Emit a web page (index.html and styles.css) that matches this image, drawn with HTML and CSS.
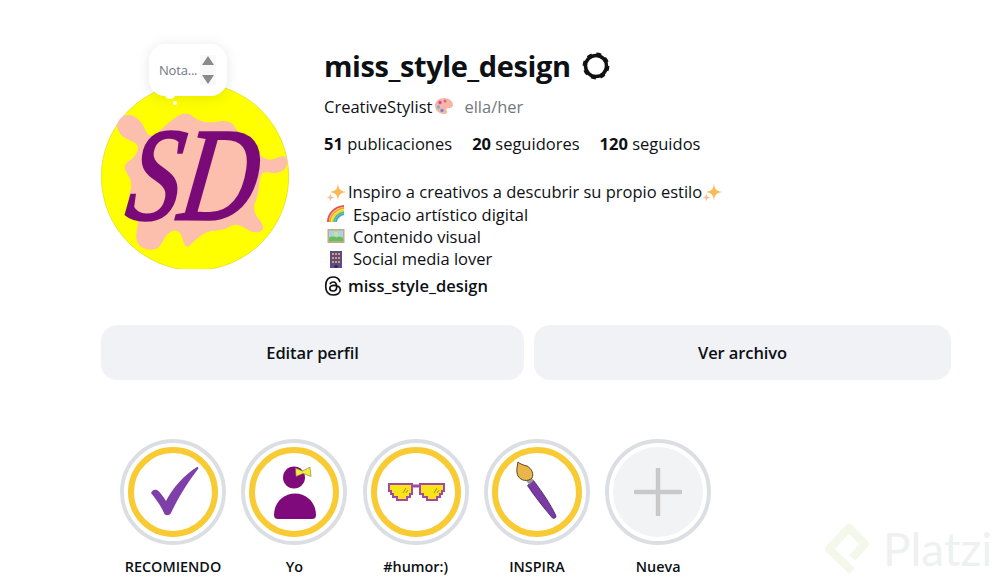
FILE: index.html
```html
<!DOCTYPE html>
<html lang="es">

<head>
  <meta charset="UTF-8">
  <meta name="viewport" content="width=device-width, initial-scale=1.0">
  <title>miss_style_design</title>
  <link rel="stylesheet" href="styles.css">
</head>

<body>
  <main class="profile">
    <header class="top">
      <div class="avatar">
        <svg class="avatar-img" viewBox="33 165 564 555">
          <circle cx="315" cy="443" r="281" fill="#ffff00" stroke="#d8d820" stroke-width="2" />
          <path fill="#fcbfae" d="M92 268 Q110 250 132 262 Q155 275 167 305 Q180 335 210 305 Q240 275 265 260 Q290 245 312 265 Q335 285 380 278 Q425 270 437 298 Q450 325 482 355 Q515 385 530 390 Q545 395 565 385 Q592 375 592 398 Q592 420 572 428 Q555 435 532 430 Q510 425 508 462 Q505 500 495 522 Q485 545 508 572 Q530 600 510 608 Q490 615 465 598 Q440 580 420 592 Q400 605 375 605 Q350 605 330 622 Q310 640 298 650 Q285 660 278 630 Q270 600 250 605 Q230 610 218 638 Q205 665 178 662 Q150 660 142 640 Q135 620 142 595 Q150 570 130 545 Q110 520 120 490 Q130 460 112 435 Q95 410 115 398 Q135 385 142 365 Q150 345 122 335 Q95 325 85 305 Q75 285 92 268 Z" />
          <text class="logo-letter" transform="translate(102 570) skewX(-8) scale(0.8 1)" font-size="395">SD</text>
        </svg>
        <div class="note">
          <span class="note-text">Nota...</span>
          <span class="note-spin">
            <svg width="14" height="30" viewBox="0 0 14 30">
              <path d="M7 1 L13 10 H1 Z M1 20 H13 L7 29 Z" fill="#8a8a8a" />
            </svg>
          </span>
        </div>
        <span class="note-tail"></span>
        <span class="note-dot"></span>
      </div>

      <div class="info">
        <div class="name-row">
          <h1>miss_style_design</h1>
          <svg class="badge" width="30" height="30" viewBox="0 0 30 30">
            <circle cx="15" cy="15" r="10.5" fill="none" stroke="#111" stroke-width="3.5" />
            <circle cx="15" cy="15" r="12.4" fill="none" stroke="#111" stroke-width="2" stroke-dasharray="5 4.740" />
          </svg>
        </div>

        <div class="subtitle">
          <span>CreativeStylist</span>
          <svg class="emoji palette" width="20" height="20" viewBox="0 0 20 20">
            <path d="M10 2 C15 2 19 5 19 9 C19 12 16 12 14 12 C12 12 12 14 13 15 C14 17 12 18 10 18 C5 18 1 14 1 10 C1 5 5 2 10 2 Z" fill="#f4b6a6" />
            <circle cx="6" cy="6.500" r="1.700" fill="#e0489a" />
            <circle cx="11" cy="5" r="1.500" fill="#e8618c" />
            <circle cx="4.500" cy="11" r="1.700" fill="#7fb2c8" />
            <circle cx="8" cy="14.500" r="1.700" fill="#7c86c8" />
          </svg>
          <span class="pronouns">ella/her</span>
        </div>

        <ul class="stats">
          <li><b>51</b> publicaciones</li>
          <li><b>20</b> seguidores</li>
          <li><b>120</b> seguidos</li>
        </ul>

        <div class="bio">
          <div class="bio-line">
            <svg class="emoji tight" width="20" height="20" viewBox="0 0 20 20">
              <path d="M12 1 C12.500 7 14 9 20 10 C14 11 12.500 13 12 19 C11.500 13 10 11 4 10 C10 9 11.500 7 12 1 Z" fill="#fbb954" />
              <path d="M4.500 11 C4.800 14 5.500 15 8.500 15.500 C5.500 16 4.800 17 4.500 20 C4.200 17 3.500 16 0.500 15.500 C3.500 15 4.200 14 4.500 11 Z" fill="#f9c08c" />
            </svg>
            <span>Inspiro a creativos a descubrir su propio estilo</span>
            <svg class="emoji" width="20" height="20" viewBox="0 0 20 20">
              <path d="M12 1 C12.500 7 14 9 20 10 C14 11 12.500 13 12 19 C11.500 13 10 11 4 10 C10 9 11.500 7 12 1 Z" fill="#fbb954" />
              <path d="M4.500 11 C4.800 14 5.500 15 8.500 15.500 C5.500 16 4.800 17 4.500 20 C4.200 17 3.500 16 0.500 15.500 C3.500 15 4.200 14 4.500 11 Z" fill="#f9c08c" />
            </svg>
          </div>
          <div class="bio-line">
            <svg class="emoji" width="20" height="20" viewBox="0 0 20 20" fill="none" stroke-width="2">
              <path d="M2 18 C2 10 8 3 18 2" stroke="#e5534b" />
              <path d="M4 18 C4 12 10 5 18 4" stroke="#f5a623" />
              <path d="M6 18 C6 13 11 7 18 6" stroke="#f5dc3c" />
              <path d="M8 18 C8 14 12 9 18 8" stroke="#5cbf6a" />
              <path d="M10 18 C10 15 13 11 18 10" stroke="#4aa3e0" />
            </svg>
            <span>Espacio artístico digital</span>
          </div>
          <div class="bio-line">
            <svg class="emoji" width="20" height="20" viewBox="0 0 20 20">
              <rect x="1.500" y="3" width="17" height="14" fill="#cfa57c" />
              <rect x="3" y="4.500" width="14" height="11" fill="#9fd6ea" />
              <circle cx="10" cy="8" r="2" fill="#f5d76a" />
              <path d="M3 15.500 V12 C6 9.500 9 11 10.500 11.500 C13 10 15 10.500 17 12 V15.500 Z" fill="#6cbb5a" />
            </svg>
            <span>Contenido visual</span>
          </div>
          <div class="bio-line">
            <svg class="emoji" width="20" height="20" viewBox="0 0 20 20">
              <rect x="4" y="2" width="12" height="17" fill="#5b4a8e" />
              <path d="M6 4 H8 V6 H6 Z M9 4 H11 V6 H9 Z M12 4 H14 V6 H12 Z M6 8 H8 V10 H6 Z M9 8 H11 V10 H9 Z M12 8 H14 V10 H12 Z M6 12 H8 V14 H6 Z M9 12 H11 V14 H9 Z M12 12 H14 V14 H12 Z" fill="#d9a04c" />
              <rect x="8.500" y="16" width="3" height="3" fill="#2f2a50" />
            </svg>
            <span>Social media lover</span>
          </div>
        </div>

        <a class="threads">
          <svg width="18" height="20" viewBox="0 0 18 20" fill="none" stroke="#111" stroke-width="1.700" stroke-linecap="round">
            <path d="M15.800 5.500 C14.800 2.500 12.500 1 9.300 1 C4.500 1 1.700 4.300 1.700 10 C1.700 15.700 4.500 19 9.300 19 C13.500 19 16.300 16.800 16.300 13.800 C16.300 10.800 13.500 9.300 10 9.300 C7.500 9.300 5.800 10.500 5.800 12.300 C5.800 14 7.300 15 9.100 15 C11.400 15 12.700 13.300 12.700 10.800 C12.700 7.800 11.300 6 9.200 6 C7.900 6 6.900 6.500 6.300 7.500" />
          </svg>
          <span>miss_style_design</span>
        </a>
      </div>
    </header>

    <div class="actions">
      <button class="btn btn-edit">Editar perfil</button>
      <button class="btn btn-archive">Ver archivo</button>
    </div>

    <section class="highlights">
      <div class="highlight">
        <div class="ring">
          <div class="ring-inner">
            <svg width="78" height="78" viewBox="0 0 78 78">
              <path d="M17 40 C18 37 21 36 23 37 C26 39 29 43 32 48 C38 36 50 22 63 14 C64 13.500 65 15 64 16 C54 29 44 45 37 60 C35 63 31 63 30 60 C27 53 22 46 17 40 Z" fill="#7f3fa8" />
            </svg>
          </div>
        </div>
        <span class="label">RECOMIENDO</span>
      </div>

      <div class="highlight">
        <div class="ring">
          <div class="ring-inner">
            <svg width="78" height="78" viewBox="0 0 78 78">
              <circle cx="39" cy="24.500" r="11" fill="#7e0a7c" />
              <path d="M19 62 C19 50 28 40.500 40 40.500 C52 40.500 61 50 61 62 Q61 66 57 66 H23 Q19 66 19 62 Z" fill="#7e0a7c" />
              <path d="M40.500 15 L47.500 18 L55 14 L56 23.500 L48 20.500 L41 23.500 Z" fill="#f4ec3c" stroke="#77773a" stroke-width="0.600" />
            </svg>
          </div>
        </div>
        <span class="label">Yo</span>
      </div>

      <div class="highlight">
        <div class="ring">
          <div class="ring-inner">
            <svg width="78" height="78" viewBox="0 0 78 78">
              <path d="M34 33 H44" stroke="#a34aa0" stroke-width="3" />
              <path d="M12 31 H35 V41 H33 V44 H30 V47 H20 V44 H16 V41 H14 V38 H12 Z" fill="#f7e51a" stroke="#a34aa0" stroke-width="2" />
              <path d="M43 31 H67 V38 H65 V41 H63 V44 H60 V47 H50 V44 H46 V41 H43 Z" fill="#f7e51a" stroke="#a34aa0" stroke-width="2" />
              <path d="M26 40 L29 35 M29 40 L31 37 M57 40 L60 35 M60 40 L62 37" stroke="#8a7a30" stroke-width="0.800" />
            </svg>
          </div>
        </div>
        <span class="label">#humor:)</span>
      </div>

      <div class="highlight">
        <div class="ring">
          <div class="ring-inner">
            <svg width="78" height="78" viewBox="0 0 78 78">
              <path d="M29.500 32.500 L35.500 27.500 C45 40 53 52 58 63 C58 65.500 55 66 54 64.500 C46 55 37 44 29.500 32.500 Z" fill="#7b3aa5" stroke="#3b2a5a" stroke-width="0.800" />
              <path d="M30.500 26 L33.500 29.500" stroke="#9a9a9a" stroke-width="6" />
              <path d="M20 9 C19 14 18 19 20 23 C23 28 30 29 34 25 C36 21 34 16 29 13 C25 12 22 11 20 9 Z" fill="#e9b64a" stroke="#5a4520" stroke-width="1" />
            </svg>
          </div>
        </div>
        <span class="label">INSPIRA</span>
      </div>

      <div class="highlight">
        <div class="ring">
          <div class="ring-new">
            <svg width="48" height="48" viewBox="0 0 48 48">
              <path d="M1.500 24 H46.500 M24 1.500 V46.500" stroke="#c9c9c9" stroke-width="4.500" stroke-linecap="round" />
            </svg>
          </div>
        </div>
        <span class="label">Nueva</span>
      </div>
    </section>
  </main>

  <div class="watermark">
    <svg width="47" height="55" viewBox="0 0 47 55" fill="none">
      <path d="M28 50 L5 28 L25 7 L41 23 L28 37" stroke="#f3f8ea" stroke-width="8" stroke-linejoin="round" />
    </svg>
    <span>Platzi</span>
  </div>
</body>

</html>
```

FILE: styles.css
```css
html,
body {
  height: 100%;
  margin: 0;
  overflow: hidden;
}

body {
  background-color: white;
  color: #0d1014;
  font-family: 'Open Sans', 'Noto Sans', sans-serif;
  font-size: 16.5px;
  position: relative;
}

.profile {
  padding: 46px 50px 0 101px;
}

.top {
  display: flex;
  gap: 35px;
}

.avatar {
  position: relative;
  width: 188px;
  height: 185px;
  margin-top: 38px;
}

.avatar-img {
  display: block;
  width: 188px;
  height: 185px;
}

.logo-letter {
  fill: #7a0a78;
  stroke: #7a0a78;
  stroke-width: 9px;
  font-family: 'Liberation Serif', serif;
  font-style: italic;
}

/* nota encima del avatar */
.note {
  position: absolute;
  top: -40px;
  left: 48px;
  width: 78px;
  height: 52px;
  box-sizing: border-box;
  padding-left: 10px;
  display: flex;
  align-items: center;
  background-color: white;
  border-radius: 16px;
  box-shadow: 0 2px 14px rgba(0, 0, 0, 0.1);
}

.note-text {
  width: 41px;
  font-size: 13px;
  letter-spacing: -0.2px;
  color: #737880;
  white-space: nowrap;
}

.note-spin {
  display: flex;
  padding: 0 1px;
  background-color: #f8f8f8;
}

.note-spin svg {
  display: block;
}

.note-tail {
  position: absolute;
  top: 7px;
  left: 64px;
  width: 10px;
  height: 8px;
  background-color: white;
  border-radius: 50%;
}

.note-dot {
  position: absolute;
  top: 17px;
  left: 72px;
  width: 4px;
  height: 4px;
  background-color: white;
  border-radius: 50%;
}

.name-row {
  display: flex;
  align-items: center;
  gap: 10px;
  height: 40px;
}

h1 {
  margin: 0;
  font-size: 29px;
  font-weight: 700;
  letter-spacing: -0.42px;
  line-height: 40px;
}

.subtitle {
  display: flex;
  align-items: center;
  height: 24px;
  margin-top: 8px;
}

.palette {
  margin: 0 0 0 2px;
}

.pronouns {
  margin-left: 10px;
  color: #737880;
}

.stats {
  display: flex;
  gap: 20px;
  height: 24px;
  margin: 14px 0 0;
  padding: 0;
  list-style-type: none;
  line-height: 24px;
}

.bio {
  margin-top: 24.5px;
}

.bio-line {
  display: flex;
  align-items: center;
  height: 22.4px;
  white-space: nowrap;
}

.emoji {
  flex: none;
}

.bio-line .emoji:first-child {
  margin: 0 7px 0 2px;
}

.bio-line .emoji.tight {
  margin-right: 2px;
}

.threads {
  display: flex;
  align-items: center;
  gap: 6px;
  height: 22px;
  margin-top: 4.5px;
  font-weight: 600;
}

.actions {
  display: flex;
  gap: 10px;
  margin-top: 28px;
}

.btn {
  height: 55px;
  padding-top: 2px;
  border: none;
  border-radius: 16px;
  background-color: #f0f2f5;
  color: #0d1014;
  font-family: inherit;
  font-size: 16.5px;
  font-weight: 600;
  letter-spacing: -0.1px;
}

.btn-edit {
  width: 423px;
}

.btn-archive {
  width: 417px;
}

.highlights {
  display: flex;
  gap: 15.3px;
  margin-top: 59px;
  padding-left: 19px;
}

.highlight {
  display: flex;
  flex-direction: column;
  align-items: center;
  width: 106px;
}

.ring {
  display: flex;
  justify-content: center;
  align-items: center;
  width: 106px;
  height: 106px;
  box-sizing: border-box;
  border: 4px solid #dbdfe4;
  border-radius: 50%;
}

.ring-inner {
  display: flex;
  width: 90px;
  height: 90px;
  box-sizing: border-box;
  border: 6px solid #f8cb34;
  border-radius: 50%;
}

.ring-new {
  display: flex;
  justify-content: center;
  align-items: center;
  width: 90px;
  height: 90px;
  background-color: #f2f3f5;
  border-radius: 50%;
}

.label {
  margin-top: 12px;
  font-size: 14.4px;
  font-weight: 600;
  line-height: 20px;
  white-space: nowrap;
}

.watermark {
  position: absolute;
  left: 824px;
  top: 521px;
  display: flex;
  align-items: center;
  gap: 12px;
  color: #eff1f1;
  font-family: 'Lato', sans-serif;
  font-size: 46px;
  line-height: 55px;
}
```
